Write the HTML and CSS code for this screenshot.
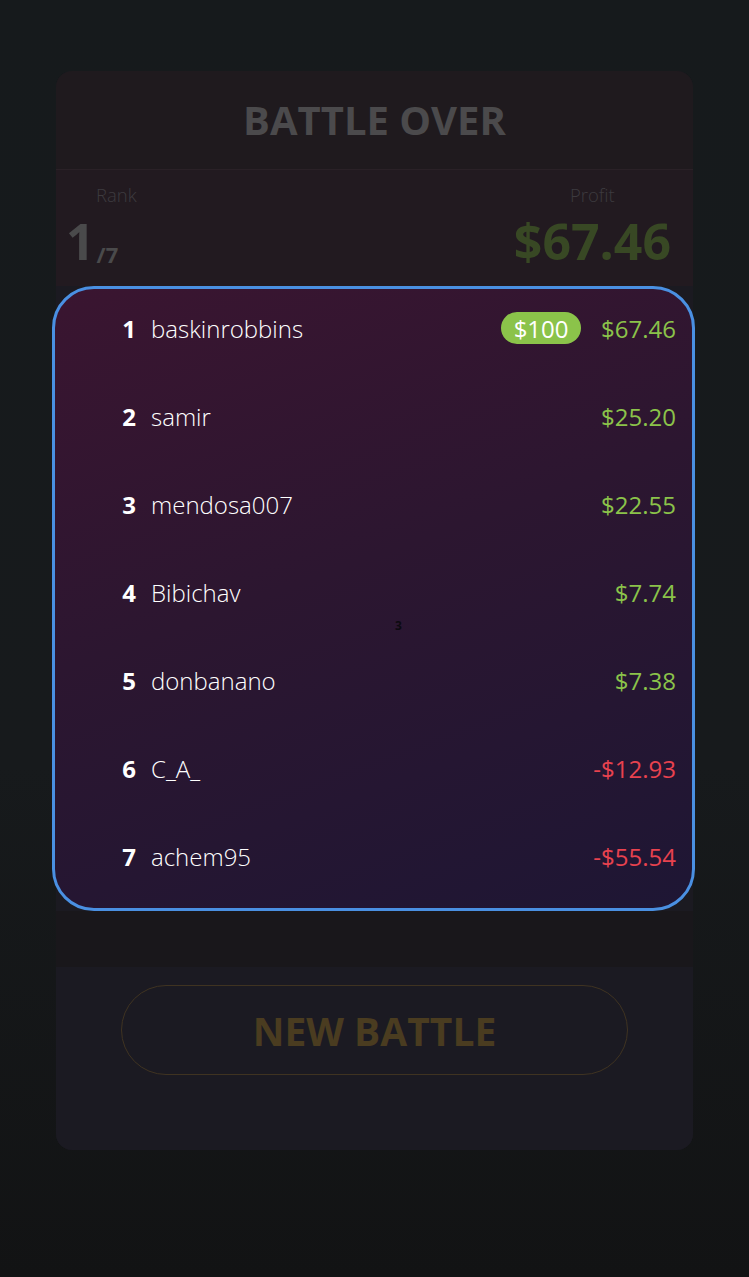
FILE: index.html
```html
<!DOCTYPE html>
<html>
<head>
<meta charset="utf-8">
<link rel="stylesheet" href="styles.css">
</head>
<body>
<div class="screen">
  <div class="card">
    <div class="card-head">BATTLE OVER</div>
    <div class="stats">
      <div class="stat stat-rank">
        <div class="stat-label">Rank</div>
        <div class="rank-value"><span class="rank-big">1</span><span class="rank-of">/7</span></div>
      </div>
      <div class="stat stat-profit">
        <div class="stat-label">Profit</div>
        <div class="profit-value">$67.46</div>
      </div>
    </div>
    <div class="board">
      <div class="row"><span class="pos">1</span><span class="name">baskinrobbins</span><span class="badge">$100</span><span class="amt up">$67.46</span></div>
      <div class="row"><span class="pos">2</span><span class="name">samir</span><span class="amt up">$25.20</span></div>
      <div class="row"><span class="pos">3</span><span class="name">mendosa007</span><span class="amt up">$22.55</span></div>
      <div class="row"><span class="pos">4</span><span class="name">Bibichav</span><span class="amt up">$7.74</span></div>
      <div class="row"><span class="pos">5</span><span class="name">donbanano</span><span class="amt up">$7.38</span></div>
      <div class="row"><span class="pos">6</span><span class="name">C_A_</span><span class="amt down">-$12.93</span></div>
      <div class="row"><span class="pos">7</span><span class="name">achem95</span><span class="amt down">-$55.54</span></div>
      <span class="step-mark">3</span>
    </div>
    <div class="gap-band"></div>
    <div class="actions">
      <div class="btn-new">NEW BATTLE</div>
    </div>
  </div>
</div>
</body>
</html>
```

FILE: styles.css
```css
* { box-sizing: border-box; }
html, body { margin: 0; padding: 0; }
body {
  width: 749px;
  height: 1277px;
  overflow: hidden;
  background: linear-gradient(180deg, #161a1c 0%, #171a1c 60%, #121314 100%);
  font-family: "Open Sans", "Noto Sans", sans-serif;
}
.screen {
  padding: 71px 56px 0 56px;
}
.card {
  width: 637px;
  height: 1079px;
  border-radius: 16px;
  background: #1b1a21;
  display: flex;
  flex-direction: column;
}
.card-head {
  height: 99px;
  border-radius: 16px 16px 0 0;
  background: #1f1a1e;
  border-bottom: 1px solid #2a2127;
  color: #4b4a4c;
  font-weight: 700;
  font-size: 40px;
  display: flex;
  align-items: center;
  justify-content: center;
  padding-bottom: 2px;
}
.stats {
  height: 116px;
  background: #221a20;
  display: flex;
  justify-content: space-between;
  align-items: flex-start;
  padding: 16px 22px 0 10px;
}
.stat-label {
  font-weight: 300;
  font-size: 18.5px;
  color: #3d3a3f;
  line-height: 18px;
}
.stat-rank .stat-label { padding-left: 30px; }
.rank-value {
  display: flex;
  align-items: baseline;
  color: #4a4a4b;
  font-weight: 700;
  line-height: 50px;
  margin-top: 12px;
}
.rank-big { font-size: 50px; }
.rank-of { font-size: 22px; margin-left: 2px; position: relative; top: 3px; }
.stat-profit { text-align: center; }
.profit-value {
  color: #384824;
  font-weight: 700;
  font-size: 50px;
  line-height: 50px;
  margin-top: 12px;
}
.board {
  position: relative;
  margin: 0 -2px 0 -4px;
  height: 625px;
  border: 3px solid #4a90e2;
  border-radius: 42px;
  background: linear-gradient(160deg, #3a1530 0%, #2c1630 45%, #1e1634 100%);
  padding: 0 16px 3px 0;
  display: flex;
  flex-direction: column;
  z-index: 1;
}
.row {
  height: 88px;
  padding-bottom: 10px;
  display: flex;
  align-items: center;
  font-size: 24px;
}
.pos {
  width: 81px;
  text-align: right;
  color: #ffffff;
  font-weight: 700;
}
.name {
  margin-left: 15px;
  color: #ffffff;
  font-weight: 300;
  flex: 1;
}
.badge {
  background: #8bc34a;
  color: #ffffff;
  border-radius: 16px;
  height: 32px;
  width: 80px;
  display: flex;
  align-items: center;
  justify-content: center;
  font-weight: 400;
  margin-right: 20px;
}
.amt { font-weight: 400; }
.amt.up { color: #8bc34a; }
.amt.down { color: #e8424f; }
.step-mark {
  position: absolute;
  left: 340px;
  top: 331px;
  font-size: 12px;
  line-height: 12px;
  font-weight: 700;
  color: #0c0a10;
}
.gap-band {
  height: 56px;
  background: #19171b;
}
.actions {
  flex: 1;
  background: #1b1a22;
  border-radius: 0 0 16px 16px;
  padding-top: 18px;
  display: flex;
  justify-content: center;
  align-items: flex-start;
}
.btn-new {
  width: 507px;
  height: 90px;
  border: 1.5px solid #3f3321;
  border-radius: 45px;
  color: #4a3c20;
  font-weight: 700;
  font-size: 39px;
  display: flex;
  align-items: center;
  justify-content: center;
}
```
